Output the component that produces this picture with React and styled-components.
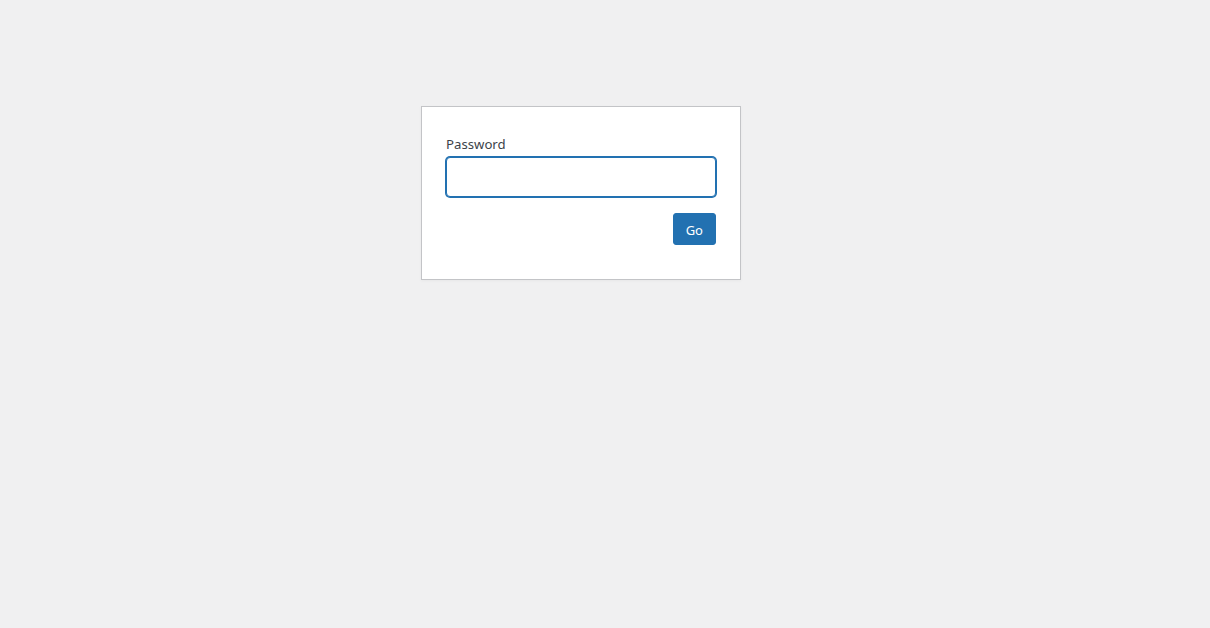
import React, { useState } from 'react';
import styled, { createGlobalStyle } from 'styled-components';

const GlobalStyle = createGlobalStyle`
    html, body {
        margin: 0;
        padding: 0;
        background: #f0f0f1;
        min-height: 100%;
    }
    body {
        font-family: "Noto Sans", "Open Sans", "Liberation Sans", sans-serif;
        color: #3c434a;
    }
`;

const Page = styled.div`
    min-height: 628px;
    padding: 106px 0 0 421px;
    box-sizing: border-box;
`;

const LoginForm = styled.form`
    width: 320px;
    box-sizing: border-box;
    background: #fff;
    border: 1px solid #c3c4c7;
    box-shadow: 0 1px 3px rgba(0, 0, 0, 0.04);
    padding: 27px 24px 34px;
    display: flex;
    flex-direction: column;
`;

const Label = styled.label`
    font-size: 13.2px;
    line-height: 21px;
    color: #3c434a;
    margin-bottom: 2px;
`;

const Input = styled.input`
    width: 100%;
    box-sizing: border-box;
    height: 40px;
    margin: 0 0 16px;
    padding: 0 8px;
    font-size: 24px;
    border: 1px solid #2271b1;
    border-radius: 4px;
    box-shadow: 0 0 0 1px #2271b1;
    outline: 2px solid transparent;
    background: #fff;
    color: #2c3338;
`;

const Actions = styled.div`
    display: flex;
    justify-content: flex-end;
`;

const Button = styled.button`
    height: 32px;
    padding: 1px 12px 0;
    background: #2271b1;
    border: 1px solid #2271b1;
    border-radius: 3px;
    color: #fff;
    font-family: inherit;
    font-size: 13px;
    cursor: pointer;
`;

function App() {
    const [password, setPassword] = useState('');

    return (
        <Page>
            <GlobalStyle />
            <LoginForm onSubmit={(e) => e.preventDefault()}>
                <Label htmlFor="pwbox">Password</Label>
                <Input
                    id="pwbox"
                    type="password"
                    value={password}
                    onChange={(e) => setPassword(e.target.value)}
                />
                <Actions>
                    <Button type="submit">Go</Button>
                </Actions>
            </LoginForm>
        </Page>
    );
}

export default App;
